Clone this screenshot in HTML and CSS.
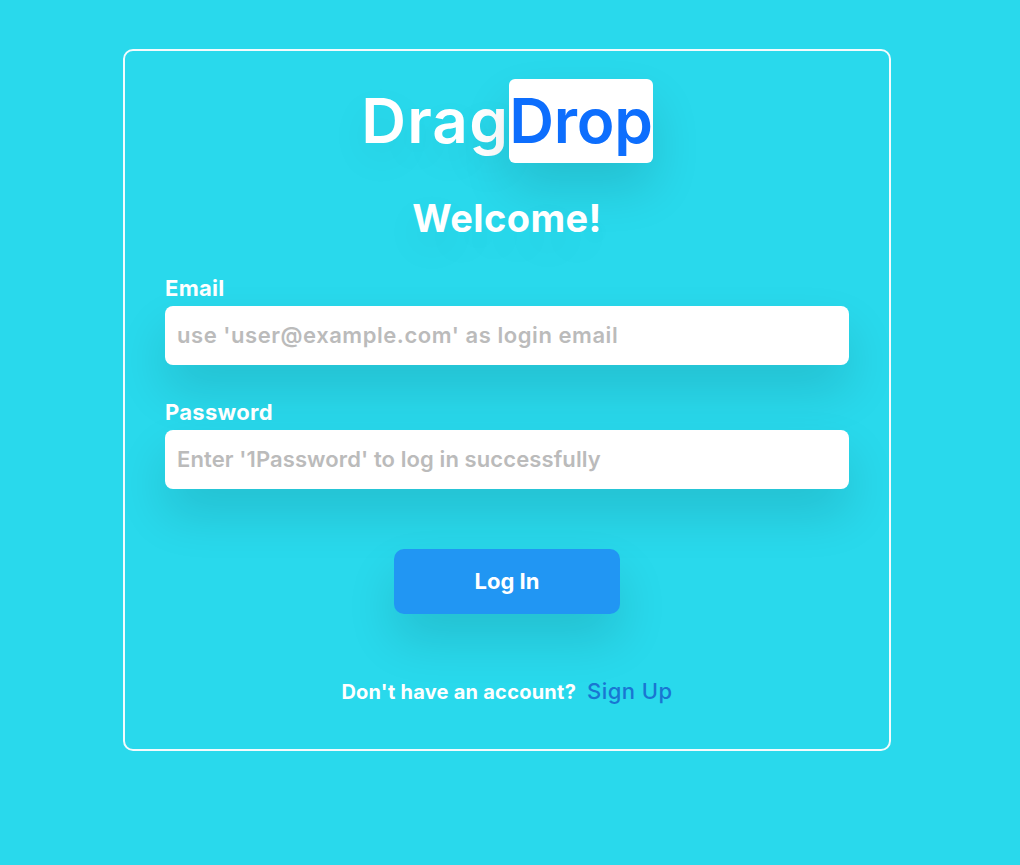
FILE: index.html
```html
<!DOCTYPE html>
<html lang="en">
<head>
  <meta charset="UTF-8">
  <meta name="viewport" content="width=device-width, initial-scale=1.0">
  <title>DragDrop Login</title>
  <link rel="stylesheet" href="styles.css">
</head>
<body>
  <!-- Login card -->
  <div class="card">
    <h1 class="logo">Drag<span>Drop</span></h1>
    <h2 class="welcome">Welcome!</h2>
    <form class="login-form">
      <label for="email">Email</label>
      <input type="email" id="email" placeholder="use 'user@example.com' as login email">
      <label for="password">Password</label>
      <input type="password" id="password" placeholder="Enter '1Password' to log in successfully">
      <button type="button">Log In</button>
    </form>
    <p class="signup">Don't have an account? <a href="#">Sign Up</a></p>
  </div>
</body>
</html>
```

FILE: styles.css
```css
* {
  margin: 0;
  padding: 0;
  box-sizing: border-box;
  font-family: "Inter", "Liberation Sans", sans-serif;
}
body {
  background: #29d9ec;
  color: white;
  height: 865px;
  overflow: hidden;
  padding: 49px 6px 0 0;
  display: flex;
  justify-content: center;
  align-items: flex-start;
}
.card {
  width: 768px;
  height: 702px;
  border: 2px solid #f2fbfd;
  border-radius: 10px;
  padding: 28px 40px 0;
  text-align: center;
}
.logo {
  font-size: 62px;
  font-weight: 600;
  line-height: 84px;
  letter-spacing: 1.2px;
  display: flex;
  justify-content: center;
  text-shadow: 0 15px 40px rgba(0, 0, 0, 0.08);
}
.logo span {
  display: block;
  color: #0d6efd;
  background: white;
  border-radius: 6px;
  letter-spacing: -0.2px;
  text-shadow: none;
  box-shadow: 0 25px 50px rgba(0, 0, 0, 0.12);
}
.welcome {
  font-size: 38px;
  font-weight: 700;
  line-height: 56px;
  letter-spacing: 0.4px;
  margin-top: 27px;
  text-shadow: 0 15px 40px rgba(0, 0, 0, 0.08);
}
.login-form {
  display: flex;
  flex-direction: column;
  align-items: flex-start;
  margin-top: 27px;
}
.login-form label {
  font-size: 22px;
  font-weight: 700;
  line-height: 31px;
  letter-spacing: 0.3px;
  padding-bottom: 2px;
}
.login-form input {
  width: 100%;
  height: 59px;
  margin-bottom: 32px;
  padding: 0 12px 2px;
  border: none;
  border-radius: 8px;
  font-size: 22px;
  font-weight: 600;
  box-shadow: 0 25px 50px rgba(0, 0, 0, 0.12);
}
#email {
  letter-spacing: 0.55px;
}
#password {
  letter-spacing: 0.1px;
}
.login-form input::placeholder {
  color: #bbb;
  opacity: 1;
}
.login-form button {
  width: 226px;
  height: 65px;
  margin: 28px auto 0;
  padding-bottom: 2px;
  border: none;
  border-radius: 10px;
  background: #2196f3;
  color: white;
  font-size: 22px;
  font-weight: 700;
  box-shadow: 0 25px 50px rgba(0, 0, 0, 0.12);
}
.signup {
  margin-top: 61px;
  font-size: 20px;
  font-weight: 700;
  line-height: 32px;
  letter-spacing: 0.25px;
  text-shadow: 0 15px 40px rgba(0, 0, 0, 0.06);
}
.signup a {
  color: #1976d2;
  font-size: 22px;
  font-weight: 500;
  letter-spacing: 0.45px;
  text-decoration: none;
  margin-left: 6px;
}
```
